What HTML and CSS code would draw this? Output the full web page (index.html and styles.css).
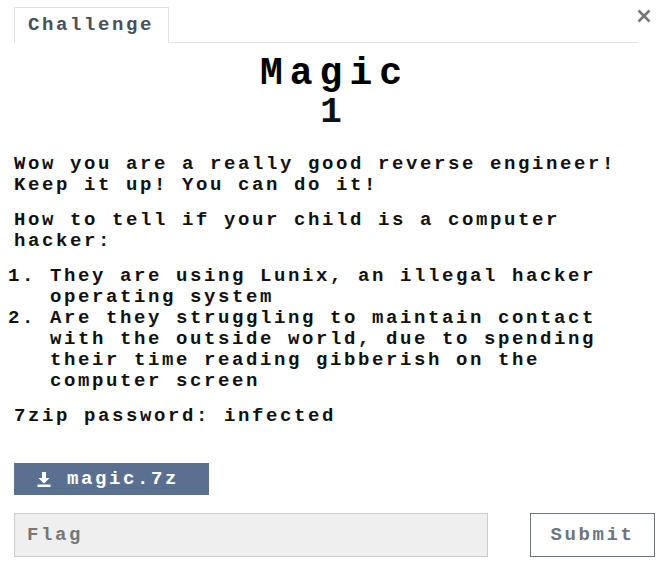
FILE: index.html
```html
<!DOCTYPE html>
<html>
<head>
<meta charset="utf-8">
<link rel="stylesheet" href="styles.css">
</head>
<body>
<div class="modal">
  <div class="header">
    <div class="tabs">
      <div class="tab">Challenge</div>
    </div>
    <button class="close" aria-label="Close">
      <svg width="14" height="14" viewBox="0 0 14 14"><path d="M1.5 1.5 L12.5 12.5 M12.5 1.5 L1.5 12.5" stroke="#777" stroke-width="2.6" fill="none"/></svg>
    </button>
  </div>
  <h2 class="name">Magic</h2>
  <h3 class="value">1</h3>
  <div class="desc">
    <p>Wow you are a really good reverse engineer!<br>Keep it up! You can do it!</p>
    <p>How to tell if your child is a computer hacker:</p>
    <ol>
      <li>They are using Lunix, an illegal hacker operating system</li>
      <li>Are they struggling to maintain contact with the outside world, due to spending their time reading gibberish on the computer screen</li>
    </ol>
    <p>7zip password: infected</p>
  </div>
  <div class="files">
    <a class="file" href="#">
      <svg width="14" height="15" viewBox="0 0 14 15"><path d="M5 0 H9 V6 H12.5 L7 11.5 L1.5 6 H5 Z" fill="#fff"/><rect x="0.5" y="12.5" width="13" height="2.5" fill="#fff"/></svg>
      <span>magic.7z</span>
    </a>
  </div>
  <div class="submit-row">
    <input class="flag" type="text" placeholder="Flag">
    <button class="submit">Submit</button>
  </div>
</div>
</body>
</html>
```
FILE: styles.css
```css
html, body {
  margin: 0;
  padding: 0;
  background: #fff;
}
body {
  font-family: "Liberation Mono", "DejaVu Sans Mono", monospace;
  font-weight: bold;
  font-size: 19px;
  letter-spacing: 2.6px;
  color: #111;
}
.modal {
  padding: 7px 11px 0 14px;
}
.header {
  display: flex;
  align-items: flex-start;
}
.tabs {
  flex: 1;
  display: flex;
  border-bottom: 1px solid #dee2e6;
  margin-right: -1px;
}
.tab {
  height: 35px;
  border: 1px solid #dee2e6;
  border-bottom: none;
  margin-bottom: -1px;
  background: #fff;
  color: #495057;
  line-height: 34px;
  padding-left: 13px;
  box-sizing: content-box;
  width: 140px;
}
.close {
  background: none;
  border: none;
  padding: 0;
  margin-top: 2px;
  margin-right: 4px;
  width: 14px;
  height: 14px;
  line-height: 0;
}
.name {
  text-align: center;
  font-size: 38px;
  letter-spacing: 7px;
  line-height: 38px;
  margin: 12px 0 0;
  color: #000;
}
.value {
  text-align: center;
  font-size: 36px;
  letter-spacing: 7px;
  line-height: 36px;
  margin: 2px 0 0;
  color: #111;
}
.desc {
  margin-top: 23px;
  line-height: 21px;
}
.desc p {
  margin: 0 0 14px;
}
.desc ol {
  margin: 0 0 14px;
  padding-left: 36px;
}
.files {
  margin-top: 36px;
}
.file {
  display: inline-flex;
  align-items: center;
  gap: 16px;
  height: 32px;
  padding: 0 30px 0 23px;
  background: #5a7090;
  color: #fff;
  text-decoration: none;
}
.submit-row {
  display: grid;
  grid-template-columns: 474px 1fr 125px;
  margin-top: 18px;
}
.flag {
  grid-column: 1;
  height: 44px;
  box-sizing: border-box;
  border: 1px solid #ccc;
  background: #efefef;
  font: inherit;
  letter-spacing: inherit;
  padding: 0 12px;
  color: #333;
}
.flag::placeholder {
  color: #777;
}
.submit {
  grid-column: 3;
  height: 44px;
  box-sizing: border-box;
  border: 1px solid #6c757d;
  background: #fff;
  font: inherit;
  letter-spacing: inherit;
  color: #6c757d;
  padding: 0;
}
```
